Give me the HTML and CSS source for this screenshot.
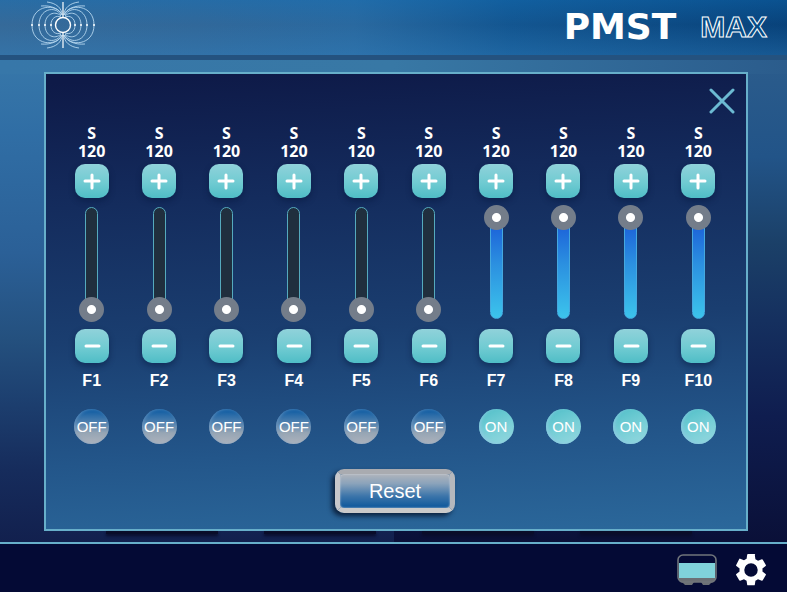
FILE: index.html
```
<!DOCTYPE html>
<html lang="en">
<head>
<meta charset="utf-8">
<meta name="viewport" content="width=device-width, initial-scale=1">
<title>PMST MAX</title>
<link rel="stylesheet" href="styles.css">
</head>
<body>
<header class="topbar">
  <svg class="field" viewBox="0 0 64 50" aria-hidden="true">
    <g id="side" fill="none" stroke="#b4d6ee" stroke-width=".9">
      <path d="M30 17C25 15 20 18 20 25S25 35 30 33"/>
      <path d="M30 16C24 10 14 14 14 25S24 40 30 34"/>
      <path d="M30 15C24 5 8 9 8 25S24 45 30 35"/>
      <path d="M31 15C26 3 1 4 1 25S26 47 31 35"/>
      <path d="M31 15C29 9 20 5 10 6M31 35C29 41 20 45 10 44"/>
      <path d="M31 15C31 8 25 3 16 2M31 35C31 42 25 47 16 48"/>
    </g>
    <use href="#side" transform="matrix(-1 0 0 1 64 0)"/>
    <path d="M32 2V17M32 33V48" stroke="#fff" stroke-width="1.2"/>
    <circle cx="32" cy="25" r="7.5" fill="none" stroke="#fff" stroke-width="1.4"/>
    <g fill="#fff"><circle cx="1" cy="25" r="1"/><circle cx="8" cy="25" r="1"/><circle cx="14" cy="25" r="1"/><circle cx="20" cy="25" r="1"/><circle cx="44" cy="25" r="1"/><circle cx="50" cy="25" r="1"/><circle cx="56" cy="25" r="1"/><circle cx="63" cy="25" r="1"/></g>
  </svg>
  <div class="brand"><span class="brand-name">PMST</span><span class="brand-model">MAX</span></div>
</header>
<main class="stage">
  <section class="panel" aria-label="Channels">
    <button class="close" type="button" aria-label="Close">
      <svg viewBox="0 0 26 26"><path d="M2 2L24 24M24 2L2 24" stroke="#6cbad2" stroke-width="3" stroke-linecap="round"/></svg>
    </button>
    <div class="channels" id="channels"></div>
    <button class="reset" type="button">Reset</button>
  </section>
  <div class="shades" aria-hidden="true"><i></i><i></i><i></i><i></i></div>
</main>
<footer class="bottombar">
  <button class="tool device" type="button" aria-label="Device">
    <svg viewBox="0 0 40 32"><path d="M1 24H39L37 28 34 29 32 31H26L24 28H17L15 31H8L6 29 3 28Z" fill="#6c7075"/><rect x="2" y="9" width="36" height="15" fill="#80d2da"/><rect x="1" y="1" width="38" height="27" rx="5" fill="none" stroke="#70757b" stroke-width="1.6"/></svg>
  </button>
  <button class="tool gear" type="button" aria-label="Settings">
    <svg viewBox="2.2 2 19.6 20"><path fill="#fff" d="M19.14 12.94c.04-.3.06-.61.06-.94s-.02-.64-.07-.94l2.03-1.58a.49.49 0 0 0 .12-.61l-1.92-3.32a.49.49 0 0 0-.59-.22l-2.39.96a7 7 0 0 0-1.62-.94l-.36-2.54A.48.48 0 0 0 13.92 2h-3.84a.48.48 0 0 0-.47.41l-.36 2.54c-.59.24-1.13.57-1.62.94l-2.39-.96a.48.48 0 0 0-.59.22L2.74 8.87a.47.47 0 0 0 .12.61l2.03 1.58a6 6 0 0 0-.02 1.88l-2.03 1.58a.49.49 0 0 0-.12.61l1.92 3.32c.12.22.37.29.59.22l2.39-.96c.5.38 1.03.7 1.62.94l.36 2.54c.05.24.24.41.48.41h3.84c.24 0 .44-.17.47-.41l.36-2.54a7 7 0 0 0 1.62-.94l2.39.96c.22.08.47 0 .59-.22l1.92-3.32a.47.47 0 0 0-.12-.61zM12 16.2A4.2 4.2 0 1 1 12 7.8a4.2 4.2 0 0 1 0 8.4"/></svg>
  </button>
</footer>
<script src="channels.js"></script>
</body>
</html>
```
FILE: channels.js
```
const channels = Array.from({ length: 10 }, (_, i) => ({ name: "F" + (i + 1), seconds: 120, on: i > 5 }));

document.getElementById("channels").innerHTML = channels.map(c => `
  <div class="channel ${c.on ? "is-on" : "is-off"}">
    <div class="time">S<br>${c.seconds}</div>
    <button class="step" type="button" aria-label="Increase ${c.name}">
      <svg viewBox="0 0 34 34"><path d="M17 11V24M10 17H24"/></svg>
    </button>
    <div class="slider">
      <span class="track"></span>
      <input type="range" min="0" max="100" value="${c.on ? 100 : 0}" id="${c.name}">
    </div>
    <button class="step" type="button" aria-label="Decrease ${c.name}">
      <svg viewBox="0 0 34 34"><path d="M11 17H24"/></svg>
    </button>
    <label class="name" for="${c.name}">${c.name}</label>
    <button class="toggle" type="button" aria-pressed="${c.on}">${c.on ? "ON" : "OFF"}</button>
  </div>`).join("");
```
FILE: styles.css
```
* { box-sizing: border-box; }

body {
  margin: 0;
  min-height: 100vh;
  display: flex;
  flex-direction: column;
  font-family: "Liberation Sans", sans-serif;
  color: #fff;
  background: #0b0d40;
}

button {
  padding: 0;
  border: 0;
  background: none;
  color: inherit;
  font-family: inherit;
  cursor: pointer;
}

svg { display: block; }

.topbar {
  display: flex;
  align-items: flex-start;
  justify-content: space-between;
  height: 60px;
  padding: 0 20px 0 31px;
  border-bottom: 5px solid #24527f;
  background:
    linear-gradient(180deg, rgba(20, 110, 180, .4), rgba(40, 90, 140, .12) 45%, rgba(50, 125, 185, .4)) padding-box,
    linear-gradient(90deg, #376c9b 0%, #326a9c 25%, #2a6ba2 45%, #105591 65%, #043f78 100%) padding-box;
}

.field { width: 64px; height: 50px; }

.brand {
  display: flex;
  align-items: center;
  gap: 24px;
  height: 53px;
}

.brand-name { font: bold 36px/36px "DejaVu Sans", sans-serif; }

.brand-model {
  font: bold 30px/36px "Liberation Sans", sans-serif;
  color: #064b86;
  -webkit-text-stroke: 1px #fff;
}

.stage {
  flex: 1;
  display: flex;
  flex-direction: column;
  padding: 12px 39px 0 44px;
  background:
    linear-gradient(90deg, #3777a9, #3878a5 50%, #2b5c8c) 0 0 / 100% 14px no-repeat,
    linear-gradient(180deg, #2b5c8c, #225488 20%, #1b4068 38%, #15305f 54%, #0f1d4f 74%, #0a1038) 100% 0 / 50% 100% no-repeat,
    linear-gradient(180deg, #3777a9, #306ea5 15%, #2b6097 40%, #24507e 58%, #1d4070 70%, #162c5c 85%, #12204e);
}

.panel {
  display: flex;
  flex-direction: column;
  align-items: center;
  padding: 14px 14px 16px 12px;
  border: 2px solid #67afca;
  background: linear-gradient(177deg, #0e1a48 2%, #13295a 23%, #1a3e70 55%, #23568a 80%, #2b689b 100%);
}

.close { align-self: flex-end; margin-right: -3px; }
.close svg { width: 26px; height: 26px; }

.channels {
  display: grid;
  grid-template-columns: repeat(10, 1fr);
  width: 100%;
  margin-top: 10px;
}

.channel {
  display: flex;
  flex-direction: column;
  align-items: center;
}

.time { font: bold 16px/18px "Noto Sans", sans-serif; text-align: center; }

.step {
  margin: 4px 0 6px;
  border-radius: 10px;
  background: linear-gradient(180deg, #90d2da, #70cbd2 55%, #4fbdc6);
  box-shadow: 0 3px 6px rgba(5, 20, 55, .45);
}

.step svg {
  width: 34px;
  height: 34px;
  fill: none;
  stroke: #fff;
  stroke-width: 3;
  stroke-linecap: round;
}

.slider {
  display: grid;
  place-items: center;
  height: 118px;
}

.slider > * { grid-area: 1 / 1; }

.slider + .step { margin: 7px 0 8px; }

.track {
  width: 13px;
  height: 112px;
  border: 1px solid #55aabd;
  border-radius: 7px;
  background: #202f3e;
}

.is-on .track {
  border-color: #45a8df;
  background: linear-gradient(180deg, #1e68da 20%, #2b8fe0 50%, #3cc4ec);
}

input[type="range"] {
  appearance: none;
  writing-mode: vertical-lr;
  direction: rtl;
  width: 25px;
  height: 117px;
  margin: 0;
  background: none;
}

input[type="range"]::-webkit-slider-thumb {
  appearance: none;
  width: 25px;
  height: 25px;
  border-radius: 50%;
  background: radial-gradient(circle, #fff 4px, #747d8a 5px);
}

.name { font-size: 16px; font-weight: bold; line-height: 20px; }

.toggle {
  width: 35px;
  height: 35px;
  margin-top: 18px;
  border-radius: 50%;
  font-size: 15px;
  line-height: 35px;
}

.is-off .toggle {
  background: linear-gradient(180deg, #1962a5 8%, #5684b0 42%, #96a5b4 68%, #adb3bd);
  box-shadow: inset 1px 0 3px rgba(120, 160, 200, .6);
}

.is-on .toggle {
  background: linear-gradient(155deg, #50bfc8, #79cfd7 55%, #95d8df);
  box-shadow: inset 2px -1px 3px rgba(140, 200, 225, .8);
}

.reset {
  width: 120px;
  height: 44px;
  margin-top: 25px;
  border: 5px solid;
  border-color: #a9abb0 #b5b8bd #cacaca #c8c8cc;
  border-radius: 9px;
  background: linear-gradient(180deg, #b0b4bb, #8ba3bb 28%, #3c75aa 65%, #0b569b) padding-box;
  box-shadow: -3px 3px 5px rgba(5, 18, 40, .8), inset 0 0 2px #d5dbe2;
  font-size: 20px;
  line-height: 34px;
}

.shades {
  display: flex;
  justify-content: space-between;
  padding: 0 56px 0 62px;
}

.shades i {
  width: 112px;
  height: 3px;
  background: #090c29;
  box-shadow: 0 2px 3px #090c29;
}

.bottombar {
  display: flex;
  align-items: center;
  justify-content: flex-end;
  gap: 18px;
  height: 50px;
  padding: 4px 20px 0 0;
  border-top: 2px solid #67afca;
  background: #040a35;
}

.device svg { width: 40px; height: 32px; }
.gear svg { width: 32px; height: 32px; }
```
